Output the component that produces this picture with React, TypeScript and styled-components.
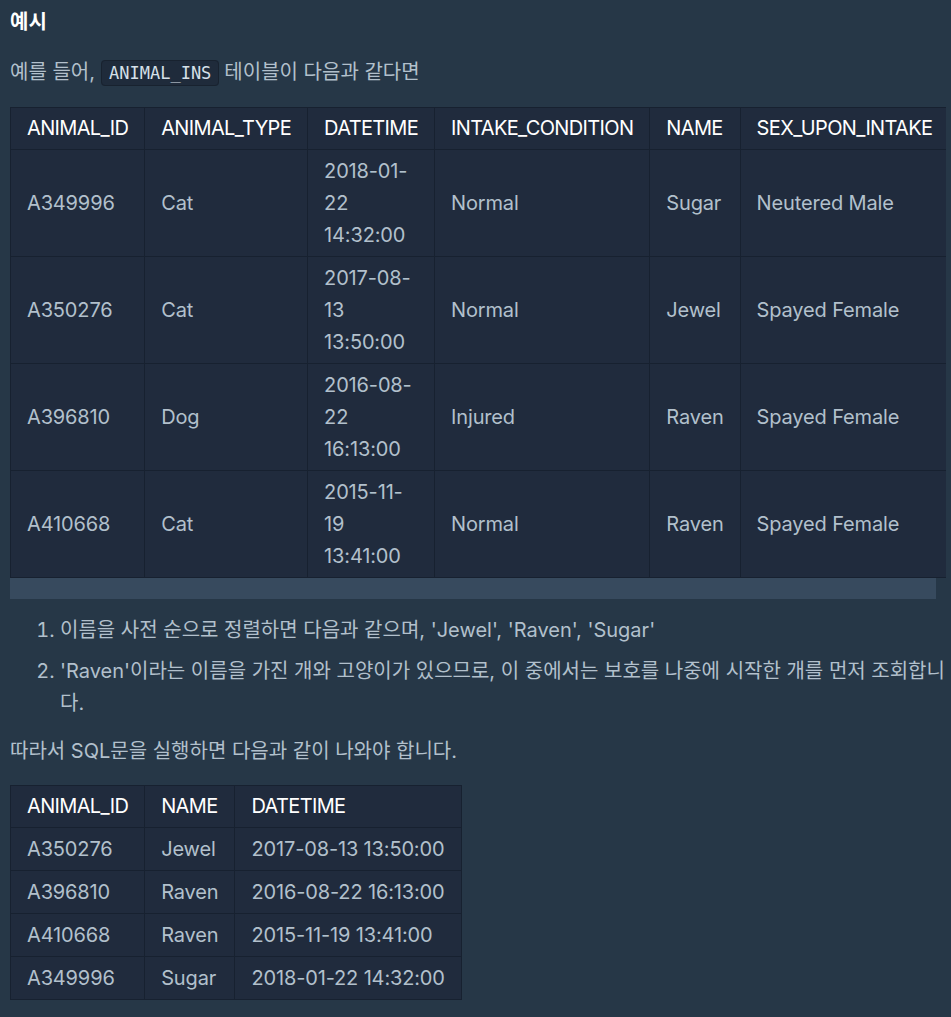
import React from 'react';
import styled, { createGlobalStyle } from 'styled-components';

const GlobalStyle = createGlobalStyle`
  html, body {
    margin: 0;
    padding: 0;
    background-color: #263747;
  }
  body {
    font-family: Inter, "Noto Sans CJK KR", sans-serif;
    font-size: 20px;
    line-height: 32px;
    color: #b2c0cc;
  }
`;

interface AnimalRow {
  id: string;
  type: string;
  datetime: string;
  condition: string;
  name: string;
  sex: string;
}

const ANIMAL_INS: AnimalRow[] = [
  { id: 'A349996', type: 'Cat', datetime: '2018-01-22 14:32:00', condition: 'Normal', name: 'Sugar', sex: 'Neutered Male' },
  { id: 'A350276', type: 'Cat', datetime: '2017-08-13 13:50:00', condition: 'Normal', name: 'Jewel', sex: 'Spayed Female' },
  { id: 'A396810', type: 'Dog', datetime: '2016-08-22 16:13:00', condition: 'Injured', name: 'Raven', sex: 'Spayed Female' },
  { id: 'A410668', type: 'Cat', datetime: '2015-11-19 13:41:00', condition: 'Normal', name: 'Raven', sex: 'Spayed Female' },
];

const RESULT = [
  { id: 'A350276', name: 'Jewel', datetime: '2017-08-13 13:50:00' },
  { id: 'A396810', name: 'Raven', datetime: '2016-08-22 16:13:00' },
  { id: 'A410668', name: 'Raven', datetime: '2015-11-19 13:41:00' },
  { id: 'A349996', name: 'Sugar', datetime: '2018-01-22 14:32:00' },
];

const Page = styled.div`
  width: 936px;
  padding: 6px 0 16px 10px;
`;

const Heading = styled.h5`
  margin: 0;
  font-size: 20px;
  line-height: 32px;
  font-weight: 600;
  color: #ffffff;
`;

const Paragraph = styled.p`
  margin: 18px 0;
  &.result {
    margin: 16px 0 18px;
  }
`;

const Code = styled.code`
  font-family: "DejaVu Sans Mono", "Liberation Mono", monospace;
  font-size: 17px;
  color: #d6e0e9;
  background-color: #1f2b3b;
  border: 1px solid #18222f;
  border-radius: 4px;
  padding: 2px 7px;
  margin: 0 5px 0 6px;
`;

const ScrollArea = styled.div`
  width: 100%;
  overflow-x: hidden;
`;

const ScrollTrack = styled.div`
  height: 21px;
  width: 100%;
`;

const ScrollThumb = styled.div`
  height: 100%;
  width: calc(100% - 10px);
  background-color: #374a5e;
`;

const Table = styled.table`
  border-collapse: collapse;
  background-color: #202b3d;
  border: 1px solid #172130;
`;

const Th = styled.th`
  padding: 4px 16px 5px;
  border: 1px solid #172130;
  color: #ffffff;
  font-weight: 400;
  letter-spacing: -0.65px;
  text-align: left;
  white-space: nowrap;
`;

const Td = styled.td<{ $nowrap?: boolean }>`
  padding: 5px 16px;
  border: 1px solid #172130;
  color: #b2c0cc;
  text-align: left;
  vertical-align: middle;
  letter-spacing: -0.15px;
  white-space: ${(p) => (p.$nowrap ? 'nowrap' : 'normal')};
`;

const List = styled.ol`
  margin: 15px 0 0;
  padding-left: 50px;
`;

const Item = styled.li`
  & + & {
    margin-top: 9px;
  }
`;

export default function App() {
  return (
    <>
      <GlobalStyle />
      <Page>
        <Heading>예시</Heading>
        <Paragraph>
          예를 들어,<Code>ANIMAL_INS</Code>테이블이 다음과 같다면
        </Paragraph>
        <ScrollArea>
          <Table>
            <thead>
              <tr>
                <Th>ANIMAL_ID</Th>
                <Th>ANIMAL_TYPE</Th>
                <Th>DATETIME</Th>
                <Th>INTAKE_CONDITION</Th>
                <Th>NAME</Th>
                <Th>SEX_UPON_INTAKE</Th>
              </tr>
            </thead>
            <tbody>
              {ANIMAL_INS.map((row) => (
                <tr key={row.id}>
                  <Td>{row.id}</Td>
                  <Td>{row.type}</Td>
                  <Td>{row.datetime}</Td>
                  <Td>{row.condition}</Td>
                  <Td>{row.name}</Td>
                  <Td>{row.sex}</Td>
                </tr>
              ))}
            </tbody>
          </Table>
        </ScrollArea>
        <ScrollTrack>
          <ScrollThumb />
        </ScrollTrack>
        <List>
          <Item>이름을 사전 순으로 정렬하면 다음과 같으며, 'Jewel', 'Raven', 'Sugar'</Item>
          <Item>
            'Raven'이라는 이름을 가진 개와 고양이가 있으므로, 이 중에서는 보호를 나중에 시작한 개를 먼저 조회합니다.
          </Item>
        </List>
        <Paragraph className="result">따라서 SQL문을 실행하면 다음과 같이 나와야 합니다.</Paragraph>
        <Table>
          <thead>
            <tr>
              <Th>ANIMAL_ID</Th>
              <Th>NAME</Th>
              <Th>DATETIME</Th>
            </tr>
          </thead>
          <tbody>
            {RESULT.map((row) => (
              <tr key={row.id}>
                <Td>{row.id}</Td>
                <Td>{row.name}</Td>
                <Td $nowrap>{row.datetime}</Td>
              </tr>
            ))}
          </tbody>
        </Table>
      </Page>
    </>
  );
}
